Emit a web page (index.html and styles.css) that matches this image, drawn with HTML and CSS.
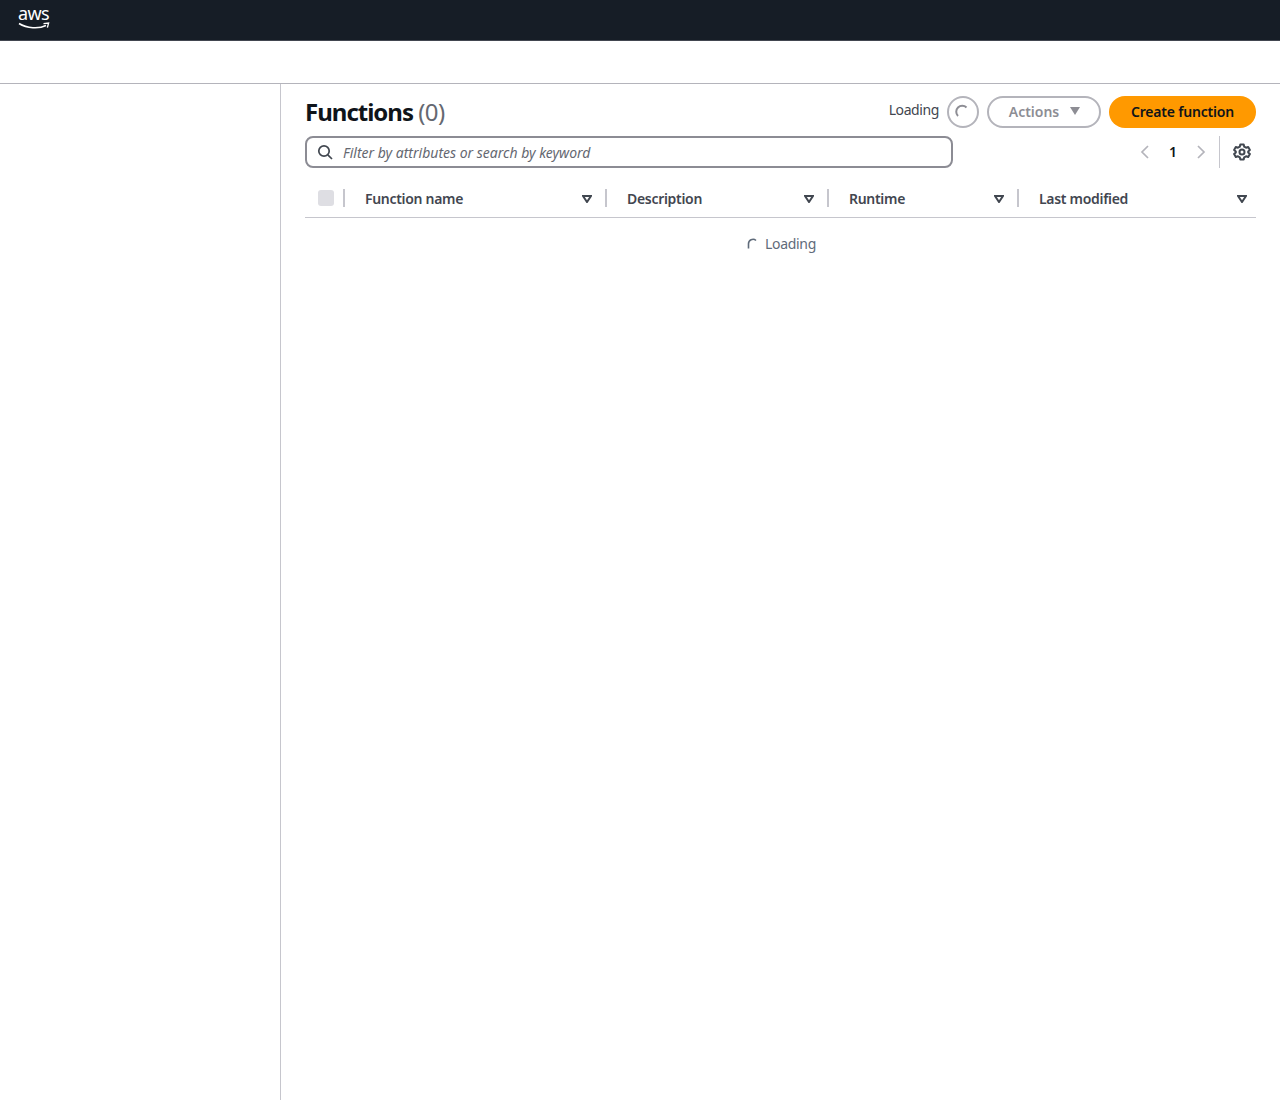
FILE: index.html
```html
<!DOCTYPE html>
<html lang="en">
<head>
    <meta charset="UTF-8">
    <meta name="viewport" content="width=device-width, initial-scale=1.0">
    <title>Functions</title>
    <link rel="stylesheet" href="styles.css">
</head>
<body>
    <header class="topbar">
        <div class="logo">
            <span class="logo-text">aws</span>
            <svg class="logo-smile" width="32" height="8" viewBox="0 0 32 8">
                <path d="M1 1.500C9 6.500 21 7 28 3.500" fill="none" stroke="#fff" stroke-width="1.500"/>
                <path d="M25.500 1.600L30.600 1L29.400 5.600" fill="none" stroke="#fff" stroke-width="1.300"/>
            </svg>
        </div>
    </header>
    <div class="breadcrumbs"></div>
    <div class="layout">
        <aside class="sidebar"></aside>
        <main class="content">
            <div class="title-row">
                <h1>Functions <span class="count">(0)</span></h1>
                <div class="actions">
                    <span class="loading-label">Loading</span>
                    <button class="btn-refresh">
                        <svg width="16" height="16" viewBox="0 0 16 16"><path d="M3 12A6 6 0 0 1 11.500 3.500" fill="none" stroke="#8d8d94" stroke-width="2"/></svg>
                    </button>
                    <button class="btn-actions"><span>Actions</span>
                        <svg width="12" height="10" viewBox="0 0 12 10"><path d="M1 1H11L6 9Z" fill="#8d8d94"/></svg>
                    </button>
                    <button class="btn-create">Create function</button>
                </div>
            </div>
            <div class="filter-row">
                <div class="search">
                    <svg width="16" height="16" viewBox="0 0 16 16"><circle cx="7" cy="7" r="5.200" fill="none" stroke="#414750" stroke-width="1.700"/><path d="M10.800 10.800L15 15" stroke="#414750" stroke-width="1.700"/></svg>
                    <span class="placeholder">Filter by attributes or search by keyword</span>
                </div>
                <div class="pager">
                    <svg width="16" height="16" viewBox="0 0 16 16"><path d="M11 2L5 8L11 14" fill="none" stroke="#b4b4bb" stroke-width="1.700"/></svg>
                    <span class="page-num">1</span>
                    <svg width="16" height="16" viewBox="0 0 16 16"><path d="M5 2L11 8L5 14" fill="none" stroke="#b4b4bb" stroke-width="1.700"/></svg>
                    <span class="pager-sep"></span>
                    <svg width="18" height="18" viewBox="0 0 18 18">
                        <path d="M7.300 1.500H10.700L11.200 3.700L13 4.700L15.200 4L16.900 7L15.200 8.500V9.500L16.900 11L15.200 14L13 13.300L11.200 14.300L10.700 16.500H7.300L6.800 14.300L5 13.300L2.800 14L1.100 11L2.800 9.500V8.500L1.100 7L2.800 4L5 4.700L6.800 3.700Z" fill="none" stroke="#414750" stroke-width="2" stroke-linejoin="round"/>
                        <circle cx="9" cy="9" r="2.500" fill="none" stroke="#414750" stroke-width="2"/>
                    </svg>
                </div>
            </div>
            <table class="functions">
                <thead>
                    <tr>
                        <th class="col-check"><span class="checkbox"></span></th>
                        <th class="col-name"><div class="cell">Function name <svg class="sort" width="10" height="8" viewBox="0 0 10 8"><path d="M1 1H9L5 7Z" fill="none" stroke="#414750" stroke-width="2"/></svg></div></th>
                        <th class="col-desc"><div class="cell">Description <svg class="sort" width="10" height="8" viewBox="0 0 10 8"><path d="M1 1H9L5 7Z" fill="none" stroke="#414750" stroke-width="2"/></svg></div></th>
                        <th class="col-run"><div class="cell">Runtime <svg class="sort" width="10" height="8" viewBox="0 0 10 8"><path d="M1 1H9L5 7Z" fill="none" stroke="#414750" stroke-width="2"/></svg></div></th>
                        <th class="col-mod"><div class="cell">Last modified <svg class="sort" width="10" height="8" viewBox="0 0 10 8"><path d="M1 1H9L5 7Z" fill="none" stroke="#414750" stroke-width="2"/></svg></div></th>
                    </tr>
                </thead>
            </table>
            <div class="table-loading">
                <svg width="12" height="12" viewBox="0 0 12 12"><path d="M1.500 10.500V6A4.500 4.500 0 0 1 9 2.500" fill="none" stroke="#5f6b7a" stroke-width="1.600"/></svg>
                <span>Loading</span>
            </div>
        </main>
    </div>
</body>
</html>
```

FILE: styles.css
```css
body {
    font-family: "Noto Sans", Arial, sans-serif;
    font-size: 14px;
    margin: 0;
    height: 1100px;
    overflow: hidden;
    background-color: #fff;
    color: #0f141a;
    display: flex;
    flex-direction: column;
}
.topbar {
    height: 40px;
    background-color: #161d26;
    border-bottom: 1px solid #424650;
    display: flex;
    align-items: flex-start;
    padding-left: 18px;
}
.logo {
    display: flex;
    flex-direction: column;
    width: 32px;
    padding-top: 5px;
}
.logo-text {
    color: #fff;
    font-size: 18px;
    line-height: 17px;
    letter-spacing: -0.6px;
}
.breadcrumbs {
    height: 42px;
    border-bottom: 1px solid #b4b4bb;
}
.layout {
    flex: 1;
    display: flex;
}
.sidebar {
    width: 280px;
    border-right: 1px solid #c6c6cd;
}
.content {
    flex: 1;
    padding: 12px 24px 0;
}
.title-row {
    display: flex;
    justify-content: space-between;
    align-items: center;
    height: 32px;
}
h1 {
    font-size: 24px;
    font-weight: 700;
    line-height: 34px;
    margin: 0;
    letter-spacing: -1px;
}
.count {
    font-weight: 400;
    color: #656871;
    letter-spacing: -0.6px;
}
.actions {
    display: flex;
    align-items: center;
    gap: 8px;
}
.loading-label {
    color: #424650;
    margin-top: -6px;
    letter-spacing: -0.4px;
}
button {
    font-family: inherit;
    font-size: 14px;
    font-weight: 600;
    height: 32px;
    border-radius: 16px;
    cursor: pointer;
}
.btn-refresh {
    width: 32px;
    padding: 0;
    border: 2px solid #b4b4bb;
    background: white;
    display: flex;
    align-items: center;
    justify-content: center;
}
.btn-actions {
    width: 114px;
    padding: 0 0 2px 2px;
    border: 2px solid #b4b4bb;
    background: white;
    color: #8d8d94;
    display: flex;
    align-items: center;
    justify-content: center;
    gap: 10px;
}
.btn-create {
    width: 147px;
    padding: 0 0 2px;
    border: none;
    background-color: #ff9900;
    color: #0f141a;
    letter-spacing: -0.2px;
}
.filter-row {
    display: flex;
    justify-content: space-between;
    align-items: center;
    height: 32px;
    margin-top: 8px;
}
.search {
    width: 634px;
    height: 28px;
    border: 2px solid #8c8c94;
    border-radius: 8px;
    display: flex;
    align-items: center;
    gap: 10px;
    padding-left: 10px;
}
.placeholder {
    font-style: italic;
    color: #656871;
}
.pager {
    display: flex;
    align-items: center;
    padding-right: 5px;
}
.page-num {
    font-weight: 600;
    width: 40px;
    text-align: center;
    margin-top: -2px;
}
.pager-sep {
    width: 1px;
    height: 32px;
    background-color: #c6c6cd;
    margin: 0 13px 0 10px;
}
.functions {
    width: 100%;
    border-collapse: collapse;
    table-layout: fixed;
    margin-top: 11px;
}
th {
    height: 38px;
    padding: 0;
    text-align: left;
    font-size: 14px;
    font-weight: 600;
    color: #424650;
    letter-spacing: -0.3px;
    border-bottom: 1px solid #c6c6cd;
}
.col-check {
    width: 38px;
}
.col-name { width: 262px; }
.col-desc { width: 222px; }
.col-run { width: 190px; }
.checkbox {
    display: block;
    width: 16px;
    height: 16px;
    margin-left: 13px;
    background-color: #dedee3;
    border-radius: 3px;
}
.cell {
    display: flex;
    justify-content: space-between;
    align-items: center;
    height: 18px;
    border-left: 2px solid #c6c6cd;
    padding: 0 13px 0 20px;
}
.col-mod .cell {
    padding-right: 9px;
}
.sort {
    margin-top: 1px;
}
.table-loading {
    display: flex;
    justify-content: center;
    align-items: center;
    gap: 6px;
    margin-top: 16px;
    padding-left: 2px;
    color: #5f6b7a;
    letter-spacing: -0.3px;
}
```
